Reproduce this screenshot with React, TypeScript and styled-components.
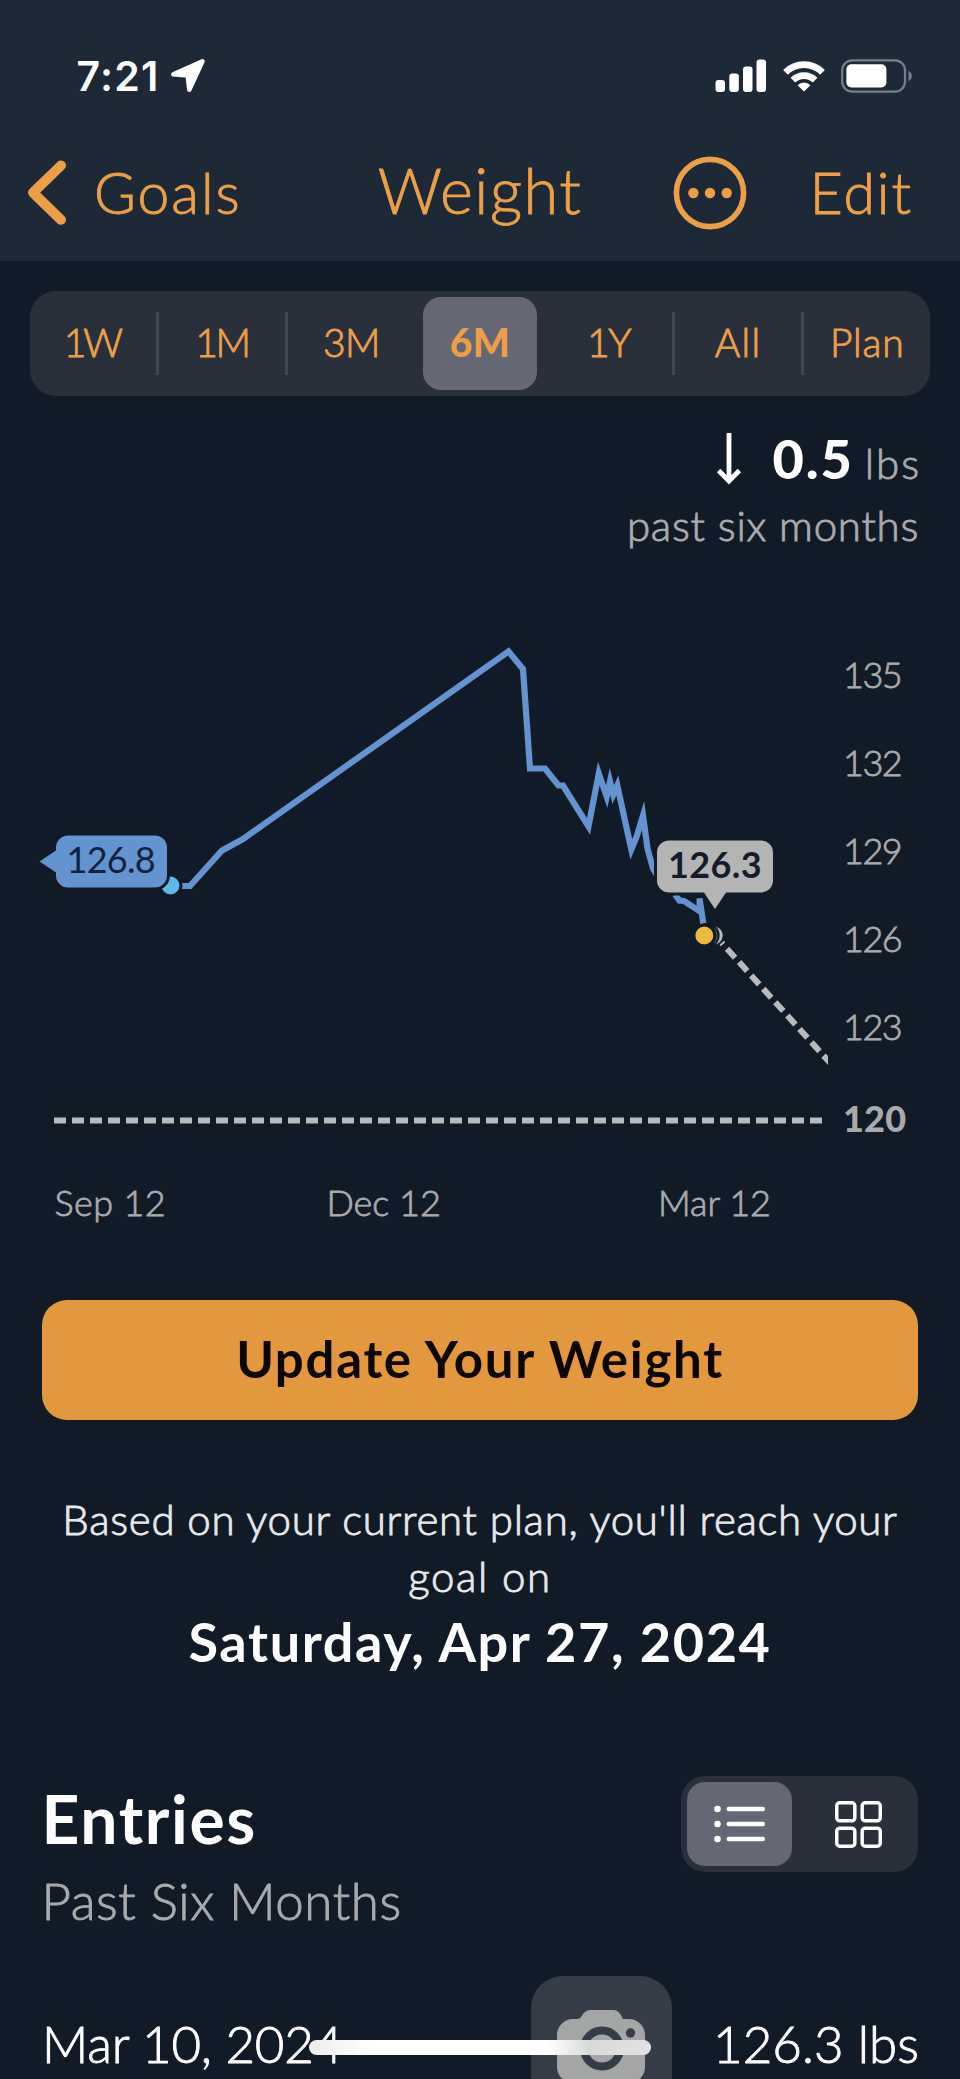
import React from 'react';
import styled, { createGlobalStyle } from 'styled-components';

const color = {
  page: '#111a27',
  header: '#1d2936',
  accent: '#ed9f47',
  button: '#e3983e',
  track: '#292f3b',
  selected: '#656774',
  divider: '#434653',
  muted: '#a9aaad',
  line: '#6494cf',
  start: '#5fb8e8',
  today: '#f1b93a',
  plan: '#b9babd',
  callout: '#b4b4b4',
};

const GlobalStyle = createGlobalStyle`
  * { box-sizing: border-box; }
  body { margin: 0; background: ${color.page}; }
`;

const Screen = styled.main`
  position: relative;
  width: 960px;
  height: 2079px;
  overflow: hidden;
  background: ${color.page};
  color: #fff;
  font-family: 'Lato', 'Open Sans', sans-serif;
  font-weight: 300;
  white-space: nowrap;
`;

/* A run of text: size, weight, tracking. Light text gets a hairline stroke for body. */
const Label = styled.span<{ $size: number; $ls?: number; $weight?: number; $color?: string }>`
  font-size: ${p => p.$size}px;
  font-weight: ${p => p.$weight ?? 300};
  letter-spacing: ${p => p.$ls ?? 0}px;
  color: ${p => p.$color ?? 'inherit'};
  -webkit-text-stroke: ${p => ((p.$weight ?? 300) === 300 ? '0.9px' : '0')};
`;

const Header = styled.header`
  height: 261px;
  background: ${color.header};
`;

const StatusBar = styled.div`
  display: flex;
  align-items: center;
  justify-content: space-between;
  height: 152px;
  padding: 0 48px 0 76.5px;
`;

const Clock = styled.div`
  display: flex;
  align-items: center;
  gap: 10px;
  font: 600 41px/50px 'Inter', sans-serif;
  letter-spacing: 1.2px;
`;

const StatusIcons = styled.div`
  display: flex;
  align-items: center;
  gap: 15px;
`;

const NavBar = styled.nav`
  display: grid;
  grid-template-columns: 1fr auto 1fr;
  align-items: center;
  height: 82px;
  color: ${color.accent};
`;

const NavSide = styled.div<{ $end?: boolean }>`
  display: flex;
  align-items: center;
  justify-content: ${p => (p.$end ? 'flex-end' : 'flex-start')};
  gap: ${p => (p.$end ? 63 : 27)}px;
  padding: ${p => (p.$end ? '0 47px 0 0' : '0 0 0 27px')};
`;

const NavText = styled(Label)`
  line-height: 76px;
  margin-top: -2px;
`;

const NavTitle = styled(Label)`
  line-height: 76px;
  margin-top: -6px;
`;

const Ranges = styled.div`
  display: grid;
  grid-template-columns: repeat(7, 1fr);
  height: 105px;
  margin: 30px 30px 0;
  border-radius: 26px;
  background: ${color.track};
`;

/* $rule: inset of the divider after the segment, $pad: left/right padding that offsets the text */
const Range = styled.button<{ $on?: boolean; $rule?: number; $pad?: [number, number] }>`
  display: flex;
  align-items: center;
  justify-content: center;
  position: relative;
  margin: 6px 7px;
  padding: 0 ${p => p.$pad?.[1] ?? 0}px 4px ${p => p.$pad?.[0] ?? 0}px;
  border: 0;
  border-radius: 18px;
  background: ${p => (p.$on ? color.selected : 'transparent')};
  color: ${color.accent};
  font-family: inherit;

  &::after {
    content: '';
    display: ${p => (p.$rule ? 'block' : 'none')};
    position: absolute;
    right: ${p => p.$rule ?? 0}px;
    top: 15px;
    width: 3px;
    height: 63px;
    background: ${color.divider};
  }
`;

const Summary = styled.section`
  display: flex;
  flex-direction: column;
  align-items: flex-end;
  padding: 32.5px 41px 0 0;
`;

const Delta = styled.div`
  display: flex;
  align-items: baseline;
  height: 71px;
  line-height: 60px;
`;

const DeltaArrow = styled.svg`
  align-self: flex-start;
  margin: 3px 31px 0 0;
`;

const DeltaUnit = styled(Label)`
  margin: 0 -2px 0 11px;
`;

const Period = styled(Label)`
  line-height: 50px;
`;

const Chart = styled.svg`
  display: block;
  width: 960px;
  height: 750.5px;
  font-family: 'Lato', sans-serif;
`;

const UpdateButton = styled.button`
  display: flex;
  align-items: center;
  justify-content: center;
  width: 876px;
  height: 120px;
  margin: 0 42px;
  padding: 0 0 4px;
  border: 0;
  border-radius: 25px;
  background: ${color.button};
  color: #0b0704;
  font-family: inherit;
`;

const Forecast = styled.section`
  display: flex;
  flex-direction: column;
  align-items: center;
  padding: 71px 42px 0;
  text-align: center;
`;

const ForecastText = styled(Label)`
  width: 876px;
  line-height: 57px;
  white-space: normal;
  color: #e6e8ea;
`;

const ForecastDate = styled(Label)`
  line-height: 73px;
`;

const EntriesHead = styled.section`
  display: flex;
  justify-content: space-between;
  align-items: flex-start;
  height: 200px;
  margin: 98px 42px 0 41.5px;
`;

const Headings = styled.div`
  display: flex;
  flex-direction: column;
  padding-top: 4px;
`;

const Title = styled(Label)`
  line-height: 78px;
`;

const Subtitle = styled(Label)`
  line-height: 85px;
`;

const ViewToggle = styled.div`
  display: flex;
  gap: 14px;
  width: 237px;
  height: 96px;
  padding: 6px;
  border-radius: 24px;
  background: ${color.track};
`;

const ViewOption = styled.button<{ $on?: boolean }>`
  display: flex;
  flex: none;
  align-items: center;
  justify-content: center;
  width: 105px;
  padding: 0;
  border: 0;
  border-radius: 18px;
  background: ${p => (p.$on ? color.selected : 'transparent')};
`;

const Entry = styled.div`
  display: flex;
  align-items: center;
  height: 141px;
  padding: 0 41px 0 42px;
`;

const EntryDate = styled(Label)`
  flex: 0 0 489px;
  padding-bottom: 7px;
`;

const Photo = styled.div`
  display: flex;
  justify-content: center;
  width: 141px;
  height: 141px;
  border-radius: 32px;
  background: #353c48;
`;

const EntryValue = styled(Label)`
  margin-left: auto;
  padding-bottom: 7px;
`;

const HomeIndicator = styled.div`
  position: absolute;
  left: 309px;
  top: 2040px;
  width: 342px;
  height: 15px;
  border-radius: 8px;
  background: linear-gradient(90deg, #ededed, #fff 18%, #fff 70%, #d9d9d9 82%, #e2e2e2);
`;

const ranges: { text: string; ls: number; rule?: number; on?: boolean; pad?: [number, number] }[] = [
  { text: '1W', ls: -3, rule: -7, pad: [0, 5] },
  { text: '1M', ls: -2.4, rule: -8, pad: [0, 2] },
  { text: '3M', ls: -0.6 },
  { text: '6M', ls: 0.3, on: true },
  { text: '1Y', ls: -1.4, rule: -9 },
  { text: 'All', ls: 1.4, rule: -10, pad: [2, 0] },
  { text: 'Plan', ls: 0.8, pad: [3, 0] },
];

const weights = [
  { text: '135', y: 687 },
  { text: '132', y: 775 },
  { text: '129', y: 863 },
  { text: '126', y: 951 },
  { text: '123', y: 1039 },
];

const dates = [
  { text: 'Sep 12', x: 54.5, ls: 0.4 },
  { text: 'Dec 12', x: 326.5, ls: 0 },
  { text: 'Mar 12', x: 658, ls: 0 },
];

const history =
  '182,885.5 190,885.5 222,850 243,838.5 508.5,651 523,668.5 530,768 545,768 558.5,785 563,785 588.5,826 598.8,773 606.7,796 610,781 613.3,794 617.3,785 631.3,849 636.7,836 643,815 647.5,848 653,868 660,880';

const recent = '675,894 679.5,900 684,900.5 700,911 699.5,898 703.5,924';

function WeightChart() {
  return (
    <Chart viewBox="0 549.5 960 750.5">
      <defs>
        <clipPath id="plot">
          <rect x="40" y="600" width="788" height="540" />
        </clipPath>
      </defs>
      <line x1="54" x2="822" y1="1120" y2="1120" stroke={color.plan} strokeWidth="6" strokeDasharray="12 6" />
      <polyline points={history} fill="none" stroke={color.line} strokeWidth="6.2" strokeMiterlimit="20" />
      <polyline points={recent} fill="none" stroke={color.line} strokeWidth="6.2" strokeMiterlimit="2" />
      <line
        x1="721.7" y1="942.3" x2="834" y2="1066.7"
        stroke={color.plan} strokeWidth="6" strokeDasharray="12 6" strokeDashoffset="10" clipPath="url(#plot)"
      />
      <circle cx="713.5" cy="935" r="9.2" fill={color.plan} />
      <circle cx="707" cy="935" r="12.6" fill={color.page} />
      <path d="M714.5 927.5a12.8 12.8 0 0 1 0 15" fill="none" stroke="#5d6570" strokeWidth="1" />
      <circle cx="704.3" cy="935" r="10.5" fill={color.today} stroke={color.page} strokeWidth="3" />
      <circle cx="170.5" cy="885" r="10.5" fill={color.start} stroke={color.page} strokeWidth="3" />
      <g stroke={color.page} strokeWidth="6" paintOrder="stroke" strokeLinejoin="round">
        <path
          d="M68 835H155a12 12 0 0 1 12 12V875a12 12 0 0 1-12 12H68a12 12 0 0 1-12-12V872L39.5 861L56 850V847a12 12 0 0 1 12-12Z"
          fill={color.line}
        />
        <path
          d="M669 840H761a12 12 0 0 1 12 12V880a12 12 0 0 1-12 12H726L715 908.5L704 892H669a12 12 0 0 1-12-12V852a12 12 0 0 1 12-12Z"
          fill={color.callout}
        />
      </g>
      <text x="66.5" y="872" fontSize="36" fontWeight="400" letterSpacing="-0.7" fill="#10223c">126.8</text>
      <text x="668" y="877" fontSize="36" fontWeight="700" letterSpacing="0.4" fill="#141c2b">126.3</text>
      <g fontSize="36" fontWeight="300" fill={color.muted} stroke={color.muted} strokeWidth="0.8">
        {weights.map(w => (
          <text key={w.text} x="843" y={w.y} letterSpacing="-1.5">{w.text}</text>
        ))}
        {dates.map(d => (
          <text key={d.text} x={d.x} y="1215" letterSpacing={d.ls}>{d.text}</text>
        ))}
      </g>
      <text x="843" y="1131.5" fontSize="36" fontWeight="900" letterSpacing="0.2" fill={color.muted}>120</text>
    </Chart>
  );
}

export default function App() {
  return (
    <Screen>
      <GlobalStyle />
      <Header>
        <StatusBar>
          <Clock>
            7:21
            <svg width="36" height="36" viewBox="0 0 36 36">
              <path d="M32.5 3.2L3.3 16.3L17.7 17.6L19.3 31.8Z" fill="#fff" stroke="#fff" strokeWidth="4.5" strokeLinejoin="round" />
            </svg>
          </Clock>
          <StatusIcons>
            <svg width="52" height="34" viewBox="0 0 52 34" fill="#fff">
              <rect x="0.5" y="21" width="9.5" height="12" rx="3" />
              <rect x="14.3" y="14.5" width="9.5" height="18.5" rx="3" />
              <rect x="28" y="7.5" width="9.5" height="25.5" rx="3" />
              <rect x="41.5" y="0.5" width="9.5" height="32.5" rx="3" />
            </svg>
            <svg width="44" height="34" viewBox="0 0 44 34" fill="none" stroke="#fff">
              <path d="M3.5 13.3A26.2 26.2 0 0 1 40.5 13.3" strokeWidth="6.8" />
              <path d="M10.9 21.2A15.8 15.8 0 0 1 33.1 21.2" strokeWidth="6.6" />
              <path d="M22 32.5L15.6 26.2A9 9 0 0 1 28.4 26.2Z" fill="#fff" stroke="none" />
            </svg>
            <svg width="71" height="34" viewBox="0 0 71 34">
              <rect x="1.2" y="1.4" width="62.8" height="31.2" rx="10" fill="none" stroke="#75808c" strokeWidth="2.2" />
              <rect x="5.4" y="5.3" width="40" height="23.2" rx="5" fill="#fff" />
              <path d="M67.5 12A5.4 5.4 0 0 1 67.5 22Z" fill="#75808c" />
            </svg>
          </StatusIcons>
        </StatusBar>
        <NavBar>
          <NavSide>
            <svg width="40" height="68" viewBox="0 0 40 68">
              <path d="M34 6.5L6 33.6L34 60.8" fill="none" stroke={color.accent} strokeWidth="10" strokeLinecap="round" strokeLinejoin="round" />
            </svg>
            <NavText $size={57} $ls={2}>Goals</NavText>
          </NavSide>
          <NavTitle $size={63} $ls={1.5}>Weight</NavTitle>
          <NavSide $end>
            <svg width="74" height="74" viewBox="0 0 74 74" fill={color.accent}>
              <circle cx="37" cy="37" r="33.6" fill="none" stroke={color.accent} strokeWidth="5.6" />
              <circle cx="20.4" cy="37" r="5.2" />
              <circle cx="37" cy="37" r="5.2" />
              <circle cx="53.7" cy="37" r="5.2" />
            </svg>
            <NavText $size={57} $ls={2}>Edit</NavText>
          </NavSide>
        </NavBar>
      </Header>

      <Ranges>
        {ranges.map(r => (
          <Range key={r.text} $on={r.on} $rule={r.rule} $pad={r.pad}>
            <Label $size={39} $ls={r.ls} $weight={r.on ? 900 : 300}>{r.text}</Label>
          </Range>
        ))}
      </Ranges>

      <Summary>
        <Delta>
          <DeltaArrow width="26" height="54" viewBox="0 0 26 54">
            <path d="M13 1V49M2.6 38.5L13 49L23.4 38.5" fill="none" stroke="#fff" strokeWidth="4.8" />
          </DeltaArrow>
          <Label $size={54} $weight={900} $ls={1.9}>0.5</Label>
          <DeltaUnit $size={42} $ls={2} $color={color.muted}>lbs</DeltaUnit>
        </Delta>
        <Period $size={42} $ls={0.75} $color={color.muted}>past six months</Period>
      </Summary>

      <WeightChart />

      <UpdateButton>
        <Label $size={51} $weight={700} $ls={1.7}>Update Your Weight</Label>
      </UpdateButton>

      <Forecast>
        <ForecastText $size={42} $ls={0.7}>
          Based on your current plan, you'll reach your
          <br />
          <Label $size={42} $ls={1.6}>goal on</Label>
        </ForecastText>
        <ForecastDate $size={54} $weight={700} $ls={1.6}>Saturday, Apr 27, 2024</ForecastDate>
      </Forecast>

      <EntriesHead>
        <Headings>
          <Title $size={66} $weight={700} $ls={1.6}>Entries</Title>
          <Subtitle $size={51} $ls={0.6} $color={color.muted}>Past Six Months</Subtitle>
        </Headings>
        <ViewToggle>
          <ViewOption $on aria-label="List">
            <svg width="52" height="38" viewBox="0 0 52 38" fill="#fff">
              {[4, 19, 34].map(y => (
                <g key={y}>
                  <circle cx="3.5" cy={y} r="3.3" />
                  <rect x="12.5" y={y - 2.3} width="38.5" height="4.6" rx="2.3" />
                </g>
              ))}
            </svg>
          </ViewOption>
          <ViewOption aria-label="Grid">
            <svg width="47" height="47" viewBox="0 0 46 46" fill="none" stroke="#fff" strokeWidth="3.4">
              <rect x="1.7" y="1.7" width="17.7" height="17.7" rx="3" />
              <rect x="26.6" y="1.7" width="17.7" height="17.7" rx="3" />
              <rect x="1.7" y="26.6" width="17.7" height="17.7" rx="3" />
              <rect x="26.6" y="26.6" width="17.7" height="17.7" rx="3" />
            </svg>
          </ViewOption>
        </ViewToggle>
      </EntriesHead>

      <Entry>
        <EntryDate $size={51} $ls={-0.2}>Mar 10, 2024</EntryDate>
        <Photo>
          <svg width="141" height="141" viewBox="0 0 141 141">
            <path
              d="M40 43H44Q49 43 50 41Q54 34 59 34H83Q88 34 92 43H98A16 16 0 0 1 114 59V91A16 16 0 0 1 98 107H42A16 16 0 0 1 26 91V59A16 16 0 0 1 42 43Z"
              fill="#a4a5a5"
            />
            <circle cx="71" cy="72.5" r="18" fill="none" stroke="#353c48" strokeWidth="8" />
            <circle cx="99.5" cy="57" r="4.7" fill="#353c48" />
          </svg>
        </Photo>
        <EntryValue $size={51} $ls={0.1}>126.3 lbs</EntryValue>
      </Entry>
      <HomeIndicator />
    </Screen>
  );
}
